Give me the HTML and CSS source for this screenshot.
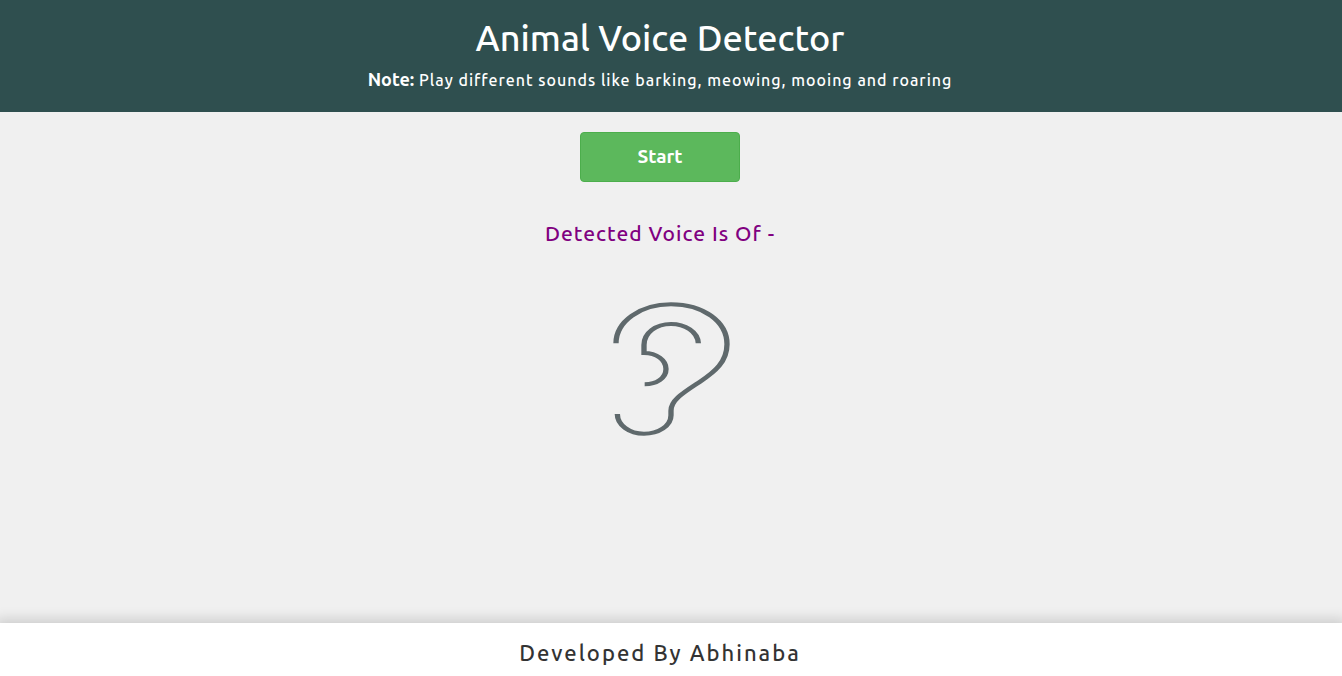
FILE: index.html
```html
<!DOCTYPE html>
<html lang="en">
<head>
<meta charset="utf-8">
<title>Animal Voice Detector</title>
<link rel="stylesheet" href="styles.css">
</head>
<body>
<header class="header">
  <h1 class="title">Animal Voice Detector</h1>
  <p class="note"><strong class="note-label">Note:</strong> Play different sounds like barking, meowing, mooing and roaring</p>
</header>
<main class="main">
  <div class="controls">
    <button class="start" type="button">Start</button>
    <h2 class="result">Detected Voice Is Of -</h2>
  </div>
  <svg class="ear" viewBox="0 0 435 465" role="img" aria-label="Ear">
    <g transform="scale(1 .75)" fill="none" stroke="#5f696c" stroke-width="16">
      <path d="M48 213C48 127 120 57 213 57C310 57 381 127 381 217C381 287 345 327 300 367C250 411 213 440 213 483V501C213 544 175 575 132 575C88 575 52 540 52 496"/>
      <path d="M295 213C293 167 255 136 213 136C168 136 132 171 132 220V252C170 252 198 280 198 316C198 352 170 377 134 377"/>
    </g>
  </svg>
</main>
<footer class="footer">
  <p class="credit">Developed By Abhinaba</p>
</footer>
</body>
</html>
```
FILE: styles.css
```css
* {
  box-sizing: border-box;
}

body {
  display: flex;
  flex-direction: column;
  min-height: 100vh;
  margin: 0;
  background: #f0f0f0;
  font-family: Ubuntu, "Noto Sans", sans-serif;
}

h1, h2, p {
  margin: 0;
}

.header {
  padding: 16px 22px 20px 0;
  background: #2f4f4f;
  color: #fff;
  text-align: center;
}

.title {
  font-size: 36px;
  font-weight: 500;
  line-height: 44px;
}

.note {
  padding-top: 7px;
  font-size: 16px;
  font-weight: 500;
  line-height: 24px;
  letter-spacing: 1px;
}

.note-label {
  font-size: 18px;
  font-weight: 700;
  letter-spacing: normal;
}

.main {
  display: flex;
  flex: 1;
  flex-direction: column;
  align-items: center;
  padding-top: 20px;
}

.controls {
  display: flex;
  flex-direction: column;
  align-items: center;
  align-self: stretch;
  gap: 35px;
  padding-right: 22px;
}

.start {
  width: 160px;
  height: 50px;
  padding: 0 0 2px;
  border: 1px solid #4cae4c;
  border-radius: 4px;
  background: #5cb85c;
  color: #fff;
  font: inherit;
  font-size: 19px;
  font-weight: 700;
}

.result {
  color: #800080;
  font-size: 21px;
  font-weight: 500;
  line-height: 32px;
  letter-spacing: 1px;
}

.ear {
  width: 145px;
  height: 155px;
  margin: 41px 0 20px 3px;
}

.footer {
  padding: 14px 22px 7px 0;
  background: #fff;
  box-shadow: 0 0 12px 4px rgba(0, 0, 0, 0.15);
  text-align: center;
}

.credit {
  color: #333;
  font-size: 22px;
  font-weight: 500;
  line-height: 32px;
  letter-spacing: 2px;
}
```
